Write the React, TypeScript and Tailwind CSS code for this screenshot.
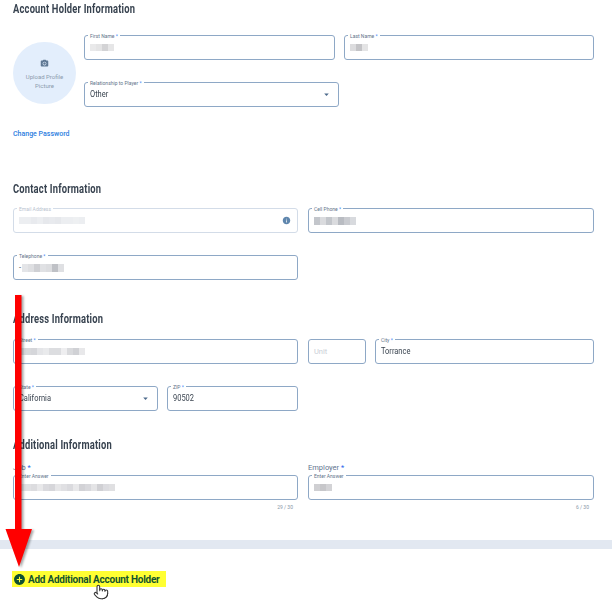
import { MdAddCircle, MdArrowDropDown, MdInfo, MdPhotoCamera } from 'react-icons/md';
import { Pointer } from 'lucide-react';

const font = { fontFamily: 'Roboto, sans-serif' };

// censored values in the screenshot are little grey mosaics
function Mosaic({ cells, h = 'h-[7px]' }: { cells: string[]; h?: string }) {
  return (
    <div className={`flex blur-[0.6px] ${h}`}>
      {cells.map((c, i) => (
        <div key={i} className="w-[6px]" style={{ backgroundColor: c }} />
      ))}
    </div>
  );
}

function Title({ children, className = '' }: { children: string; className?: string }) {
  return (
    <h2
      className={`h-[18px] origin-left scale-x-[0.78] text-[12px] leading-[19px] font-bold tracking-[0.25px] whitespace-nowrap text-[#37424f] ${className}`}
    >
      {children}
    </h2>
  );
}

function Field({
  label,
  required = true,
  value,
  children,
  className = '',
  muted = false,
}: {
  label?: string;
  required?: boolean;
  value?: string;
  children?: React.ReactNode;
  className?: string;
  muted?: boolean;
}) {
  return (
    <div
      className={`relative flex h-[25px] items-center rounded-[3px] border bg-white pl-[5px] pr-[6px] ${
        muted ? 'border-[#d3dce8]' : 'border-[#8ea8c6]'
      } ${className}`}
    >
      {label && (
        <span
          className={`absolute -top-[3px] left-[3px] bg-white px-[2px] text-[5px] leading-[6px] ${
            muted ? 'text-[#b9c3cf]' : 'text-[#62748a]'
          }`}
        >
          {label}
          {required && <span className="text-[#3b82f6]"> *</span>}
        </span>
      )}
      {value && (
        <span className="origin-left scale-x-[0.88] text-[8.5px] text-[#3a4450]">{value}</span>
      )}
      {children}
    </div>
  );
}

export default function App() {
  return (
    <div className="relative h-[600px] w-[612px] overflow-hidden bg-white" style={font}>
      <div className="pl-[13px] pr-[18px]">
        <Title>Account Holder Information</Title>

        <div className="mt-[17px] flex gap-[8px]">
          <div className="mt-[7px] flex h-[62px] w-[63px] flex-col items-center justify-center rounded-full bg-[#e3eefc] pt-[3px] text-center text-[6px] leading-[9px] text-[#8c9bad]">
            <MdPhotoCamera className="mb-[4px] text-[9px] text-[#5f7894]" />
            <span>
              Upload Profile
              <br />
              Picture
            </span>
          </div>
          <div className="flex flex-col gap-[22px]">
            <div className="flex gap-[9px]">
              <Field label="First Name" className="w-[251px]">
                <Mosaic cells={['#e9e9ea', '#e4e4e5', '#d3d3d5', '#e6e6e7']} />
              </Field>
              <Field label="Last Name" className="w-[250px]">
                <Mosaic cells={['#dcdcde', '#c4c4c7', '#e4e4e5']} />
              </Field>
            </div>
            <Field label="Relationship to Player" value="Other" className="w-[255px] justify-between">
              <MdArrowDropDown className="text-[11px] text-[#4d6a8c]" />
            </Field>
          </div>
        </div>

        <a className="mt-[20px] block h-[12px] text-[7px] leading-[14px] font-medium text-[#2b7de0]">
          Change Password
        </a>

        <Title className="mt-[41px]">Contact Information</Title>
        <div className="mt-[10px] grid grid-cols-[285px_286px] gap-x-[10px] gap-y-[22px]">
          <Field label="Email Address" required={false} muted className="justify-between">
            <Mosaic
              cells={['#eceef1', '#eceef1', '#e8eaee', '#eceef1', '#e6e8ec', '#e8eaee', '#e6e8ec', '#eceef1', '#eceef1', '#eef0f2', '#eceef1']}
            />
            <MdInfo className="text-[9px] text-[#5f86ad]" />
          </Field>
          <Field label="Cell Phone">
            <Mosaic cells={['#c3c6cb', '#dadbde', '#c3c6cb', '#dadbde', '#b9bcc2', '#c9cbd0', '#d8dade']} h="h-[8px]" />
          </Field>
          <Field label="Telephone">
            <span className="mr-[1px] text-[7.5px] text-[#3a4450]">-</span>
            <Mosaic cells={['#e4e5e8', '#dedfe2', '#cfd0d4', '#e0e1e4', '#dcdde0', '#bfc1c6', '#dfe0e3']} h="h-[8px]" />
          </Field>
        </div>

        <Title className="mt-[30px]">Address Information</Title>
        <div className="mt-[11px] flex gap-[10px]">
          <Field label="Street" className="w-[285px]">
            <Mosaic cells={['#dfe0e3', '#d8d9dc', '#d5d6da', '#e4e5e8', '#e9eaec', '#dcdde0', '#dcdde0', '#eeeef0', '#d9dadd', '#d0d1d5', '#e8e8ea']} />
          </Field>
          <Field className="w-[58px]">
            <span className="text-[7.5px] text-[#c9ced6]">Unit</span>
          </Field>
          <Field label="City" value="Torrance" className="ml-[-1px] w-[219px]" />
        </div>
        <div className="mt-[22px] flex gap-[9px]">
          <Field label="State" value="California" className="w-[145px] justify-between">
            <MdArrowDropDown className="text-[11px] text-[#4d6a8c]" />
          </Field>
          <Field label="ZIP" value="90502" className="w-[131px]" />
        </div>

        <Title className="mt-[25px]">Additional Information</Title>
        <div className="mt-[7px] grid grid-cols-[285px_286px] gap-x-[10px]">
          <div>
            <div className="mb-[2px] h-[12px] text-[7.5px] leading-[13px] text-[#5f7590]">
              Job <span className="text-[#2563eb]">*</span>
            </div>
            <Field label="Enter Answer" required={false}>
              <Mosaic
                cells={['#e6e6e8', '#e0e0e3', '#dcdcdf', '#e8e8ea', '#dadade', '#d6d6da', '#e6e6e8', '#e0e0e3', '#dadade', '#e8e8ea', '#d2d2d6', '#d8d8dc', '#e4e4e6', '#d0d0d4', '#dcdce0', '#e0e0e2']}
              />
            </Field>
            <div className="mt-[3px] pr-[5px] text-right text-[5px] leading-[8px] text-[#8896a6]">29 / 30</div>
          </div>
          <div>
            <div className="mb-[2px] h-[12px] text-[7.5px] leading-[13px] text-[#5f7590]">
              Employer <span className="text-[#2563eb]">*</span>
            </div>
            <Field label="Enter Answer" required={false}>
              <Mosaic cells={['#cfcfd2', '#c7c7ca', '#d3d3d6']} />
            </Field>
            <div className="mt-[3px] pr-[5px] text-right text-[5px] leading-[8px] text-[#8896a6]">6 / 30</div>
          </div>
        </div>
      </div>

      <div className="mt-[29px] h-[9px] bg-[#e2e8f1]" />

      <div className="ml-[12px] mt-[22px] flex h-[16px] w-[154px] items-center gap-[2px] bg-[#ffff33] pl-[1px]">
        <MdAddCircle className="shrink-0 text-[13px] text-[#0f5132]" />
        <span className="text-[10px] font-bold tracking-[-0.25px] whitespace-nowrap text-[#14532d]">Add Additional Account Holder</span>
      </div>

      {/* red annotation arrow drawn on top of the screenshot */}
      <svg className="absolute top-[290px] left-0 drop-shadow-[2px_1px_1px_rgba(0,0,0,0.35)]" width="40" height="285" viewBox="0 0 40 285">
        <path d="M15 5H21.5V239H32L19 277L5.5 239H15Z" fill="#ff0000" />
      </svg>

      {/* hand cursor */}
      <Pointer className="absolute top-[583px] left-[93px] h-[18px] w-[16px] fill-white text-[#333]" strokeWidth={1.6} />
    </div>
  );
}
